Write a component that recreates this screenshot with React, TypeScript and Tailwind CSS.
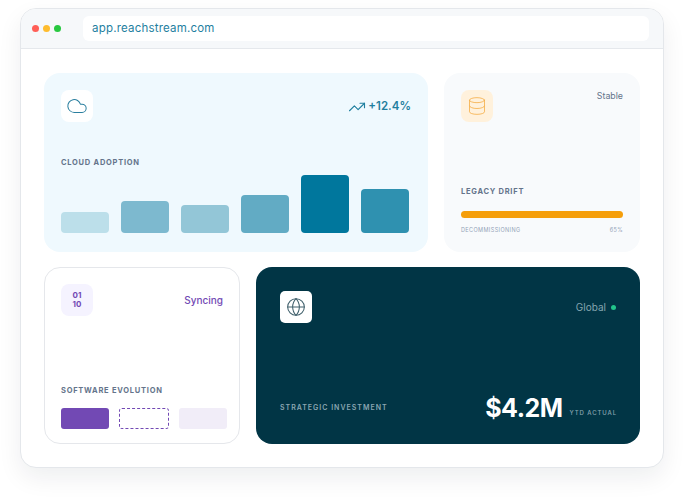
import React from 'react';
import { Cloud, Database, Globe, TrendingUp } from 'lucide-react';

const bars = [
  { h: 'h-[21px]', c: 'bg-[#bcdfea]' },
  { h: 'h-[32px]', c: 'bg-[#7db9cf]' },
  { h: 'h-[28px]', c: 'bg-[#93c6d7]' },
  { h: 'h-[38px]', c: 'bg-[#62abc4]' },
  { h: 'h-[58px]', c: 'bg-[#00779d]' },
  { h: 'h-[44px]', c: 'bg-[#2f91b0]' },
];

const App = () => {
  return (
    <div className="w-[684px] h-[500px] bg-white overflow-hidden pt-2 px-5 font-['Inter',sans-serif]">
      <div className="w-[644px] h-[460px] bg-white rounded-2xl border border-[#e4e7eb] overflow-hidden shadow-[0_10px_24px_rgba(15,23,42,0.07)]">
        <div className="h-10 bg-[#f6f8fa] border-b border-[#e5e8ec] flex items-center pl-[11px] pr-[14px]">
          <div className="flex gap-1">
            <span className="w-[7px] h-[7px] rounded-full bg-[#ff5f57]" />
            <span className="w-[7px] h-[7px] rounded-full bg-[#febc2e]" />
            <span className="w-[7px] h-[7px] rounded-full bg-[#28c840]" />
          </div>
          <div className="ml-[22px] flex-1 h-[25px] bg-white rounded-md flex items-center pl-[9px] text-[11.5px] tracking-[0.2px] text-[#1f7f9f]">
            app.reachstream.com
          </div>
        </div>

        <div className="px-[23px] pt-6 flex flex-col gap-[15px]">
          <div className="flex gap-4">
            <div className="w-[384px] h-[179px] bg-[#eff9fe] rounded-2xl p-[17px] flex flex-col justify-between">
              <div className="flex items-center justify-between">
                <div className="w-8 h-8 bg-white rounded-lg flex items-center justify-center">
                  <Cloud className="w-[22px] h-[22px] text-[#2a7f9f]" strokeWidth={1.1} />
                </div>
                <div className="flex items-center gap-[2px] text-[11.5px] font-semibold text-[#1f7f9f] mt-[1px]">
                  <TrendingUp className="w-[18px] h-[18px] text-[#1f7f9f]" strokeWidth={1.5} />
                  +12.4%
                </div>
              </div>
              <div className="flex flex-col gap-[6px] mb-[2px]">
                <div className="text-[7.5px] font-bold tracking-[0.75px] text-[#64748b] leading-3">CLOUD ADOPTION</div>
                <div className="flex items-end gap-3 h-[58px]">
                  {bars.map((b, i) => (
                    <div key={i} className={`w-12 rounded-[4px] ${b.h} ${b.c}`} />
                  ))}
                </div>
              </div>
            </div>

            <div className="w-[196px] h-[179px] bg-[#f8fafc] rounded-2xl p-[17px] flex flex-col justify-between">
              <div className="flex items-start justify-between">
                <div className="w-8 h-8 bg-[#fff1dc] rounded-lg flex items-center justify-center">
                  <Database className="w-5 h-5 text-[#f5b04a]" strokeWidth={1} />
                </div>
                <span className="text-[8.8px] text-[#64748b] leading-3">Stable</span>
              </div>
              <div className="mb-[1px]">
                <div className="text-[7.5px] font-bold tracking-[0.75px] text-[#64748b] leading-3">LEGACY DRIFT</div>
                <div className="mt-[13px] h-[7px] rounded-full bg-[#f59e0b]" />
                <div className="mt-[8px] flex justify-between text-[5.5px] tracking-[0.4px] text-[#94a3b8] leading-2">
                  <span>DECOMMISSIONING</span>
                  <span>65%</span>
                </div>
              </div>
            </div>
          </div>

          <div className="flex gap-4">
            <div className="w-[196px] h-[177px] bg-white border border-[#e5e7eb] rounded-2xl p-4 flex flex-col justify-between">
              <div className="flex items-center justify-between">
                <div className="w-8 h-8 bg-[#f5f3ff] rounded-lg flex items-center justify-center text-[8px] font-bold leading-[9px] text-[#7249b4] text-center">
                  01
                  <br />
                  10
                </div>
                <span className="text-[10px] font-medium text-[#7249b4]">Syncing</span>
              </div>
              <div className="mb-[-2px] mr-[-4px]">
                <div className="text-[7.5px] font-bold tracking-[0.75px] text-[#64748b] leading-3 mt-[1px]">SOFTWARE EVOLUTION</div>
                <div className="mt-[11px] flex gap-[10px]">
                  <div className="w-12 h-[21px] rounded-[3px] bg-[#7249b4]" />
                  <div className="w-[50px] h-[21px] rounded-[3px] border border-dashed border-[#7249b4]" />
                  <div className="w-12 h-[21px] rounded-[3px] bg-[#f1edf8]" />
                </div>
              </div>
            </div>

            <div className="w-[384px] h-[177px] bg-[#013545] rounded-2xl pl-6 pr-6 pt-6 pb-[22px] flex flex-col justify-between">
              <div className="flex items-center justify-between">
                <div className="w-8 h-8 bg-white rounded-[5px] flex items-center justify-center">
                  <Globe className="w-5 h-5 text-[#3f5f6b]" strokeWidth={1.25} />
                </div>
                <div className="flex items-center gap-[5px] text-[10px] text-[#84a5b0]">
                  Global
                  <span className="w-[5px] h-[5px] rounded-full bg-[#22c58b]" />
                </div>
              </div>
              <div className="flex items-center justify-between">
                <span className="text-[7px] font-semibold tracking-[1px] text-[#8aa6b1]">STRATEGIC INVESTMENT</span>
                <div className="flex items-end gap-[7px] mr-[-1px]">
                  <span className="text-[25px] leading-7 font-bold tracking-[-0.5px] text-white">$4.2M</span>
                  <span className="text-[6px] font-medium tracking-[0.9px] text-[#8aa6b1] mb-[5px]">YTD ACTUAL</span>
                </div>
              </div>
            </div>
          </div>
        </div>
      </div>
    </div>
  );
};

export default App;
